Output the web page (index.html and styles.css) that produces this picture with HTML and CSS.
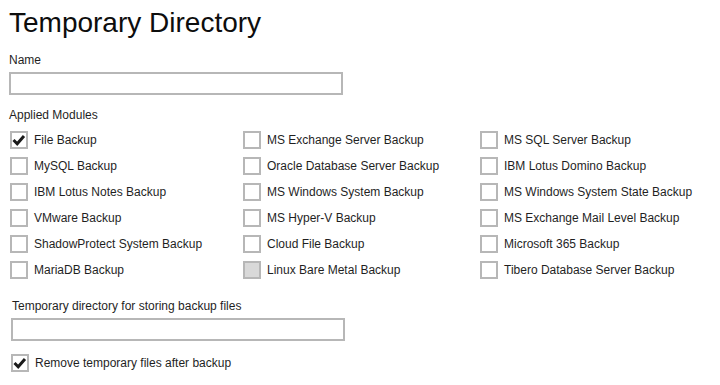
FILE: index.html
```html
<!DOCTYPE html>
<html>
<head>
<meta charset="utf-8">
<link rel="stylesheet" href="styles.css">
</head>
<body>
<div class="page">
  <h1 class="title">Temporary Directory</h1>
  <div class="field-label first">Name</div>
  <div class="text-input"></div>
  <div class="field-label section">Applied Modules</div>
  <div class="modules">
    <div class="opt"><span class="box checked"><svg viewBox="0 0 18 18"><path d="M3.5 9 L7.2 12.7 L14 5" /></svg></span><span class="lbl">File Backup</span></div>
    <div class="opt"><span class="box"></span><span class="lbl">MS Exchange Server Backup</span></div>
    <div class="opt"><span class="box"></span><span class="lbl">MS SQL Server Backup</span></div>
    <div class="opt"><span class="box"></span><span class="lbl">MySQL Backup</span></div>
    <div class="opt"><span class="box"></span><span class="lbl">Oracle Database Server Backup</span></div>
    <div class="opt"><span class="box"></span><span class="lbl">IBM Lotus Domino Backup</span></div>
    <div class="opt"><span class="box"></span><span class="lbl">IBM Lotus Notes Backup</span></div>
    <div class="opt"><span class="box"></span><span class="lbl">MS Windows System Backup</span></div>
    <div class="opt"><span class="box"></span><span class="lbl">MS Windows System State Backup</span></div>
    <div class="opt"><span class="box"></span><span class="lbl">VMware Backup</span></div>
    <div class="opt"><span class="box"></span><span class="lbl">MS Hyper-V Backup</span></div>
    <div class="opt"><span class="box"></span><span class="lbl">MS Exchange Mail Level Backup</span></div>
    <div class="opt"><span class="box"></span><span class="lbl">ShadowProtect System Backup</span></div>
    <div class="opt"><span class="box"></span><span class="lbl">Cloud File Backup</span></div>
    <div class="opt"><span class="box"></span><span class="lbl">Microsoft 365 Backup</span></div>
    <div class="opt"><span class="box"></span><span class="lbl">MariaDB Backup</span></div>
    <div class="opt"><span class="box disabled"></span><span class="lbl">Linux Bare Metal Backup</span></div>
    <div class="opt"><span class="box"></span><span class="lbl">Tibero Database Server Backup</span></div>
  </div>
  <div class="bottom">
    <div class="field-label">Temporary directory for storing backup files</div>
    <div class="text-input"></div>
    <div class="opt remove"><span class="box checked"><svg viewBox="0 0 18 18"><path d="M3.5 9 L7.2 12.7 L14 5" /></svg></span><span class="lbl">Remove temporary files after backup</span></div>
  </div>
</div>
</body>
</html>
```

FILE: styles.css
```css
html, body {
  margin: 0;
  padding: 0;
  background: #ffffff;
}

body {
  font-family: "Liberation Sans", Arial, sans-serif;
  color: #1f1f1f;
}

.page {
  padding: 7px 0 0 9px;
  width: 711px;
}

.title {
  margin: 0;
  font-size: 28px;
  line-height: 32px;
  font-weight: normal;
  color: #0d0d0d;
}

.field-label {
  font-size: 12px;
  line-height: 14px;
  margin-top: 13px;
}

.field-label.first {
  margin-top: 14px;
}

.section {
  margin-top: 13px;
}

.text-input {
  box-sizing: border-box;
  width: 334px;
  height: 23px;
  margin-top: 5px;
  border: 2px solid #b7b7b7;
  background: #ffffff;
}

.modules {
  display: grid;
  grid-template-columns: 233px 237px 1fr;
  grid-auto-rows: 26px;
  margin-top: 5px;
  padding-left: 1px;
}

.opt {
  display: flex;
  align-items: center;
  font-size: 12px;
  line-height: 14px;
}

.box {
  box-sizing: border-box;
  flex: none;
  width: 18px;
  height: 18px;
  border: 2px solid #b7b7b7;
  background: #ffffff;
  margin-right: 6px;
  position: relative;
}

.box svg {
  position: absolute;
  left: -2px;
  top: -2px;
  width: 18px;
  height: 18px;
}

.box svg path {
  fill: none;
  stroke: #1a1a1a;
  stroke-width: 3;
}

.box.disabled {
  background: #d9d9d9;
}

.bottom {
  padding-left: 2px;
}

.bottom .field-label {
  margin-top: 16px;
  padding-left: 1px;
}

.bottom .text-input {
  margin-top: 5px;
}

.remove {
  height: 26px;
  margin-top: 9px;
}
```
